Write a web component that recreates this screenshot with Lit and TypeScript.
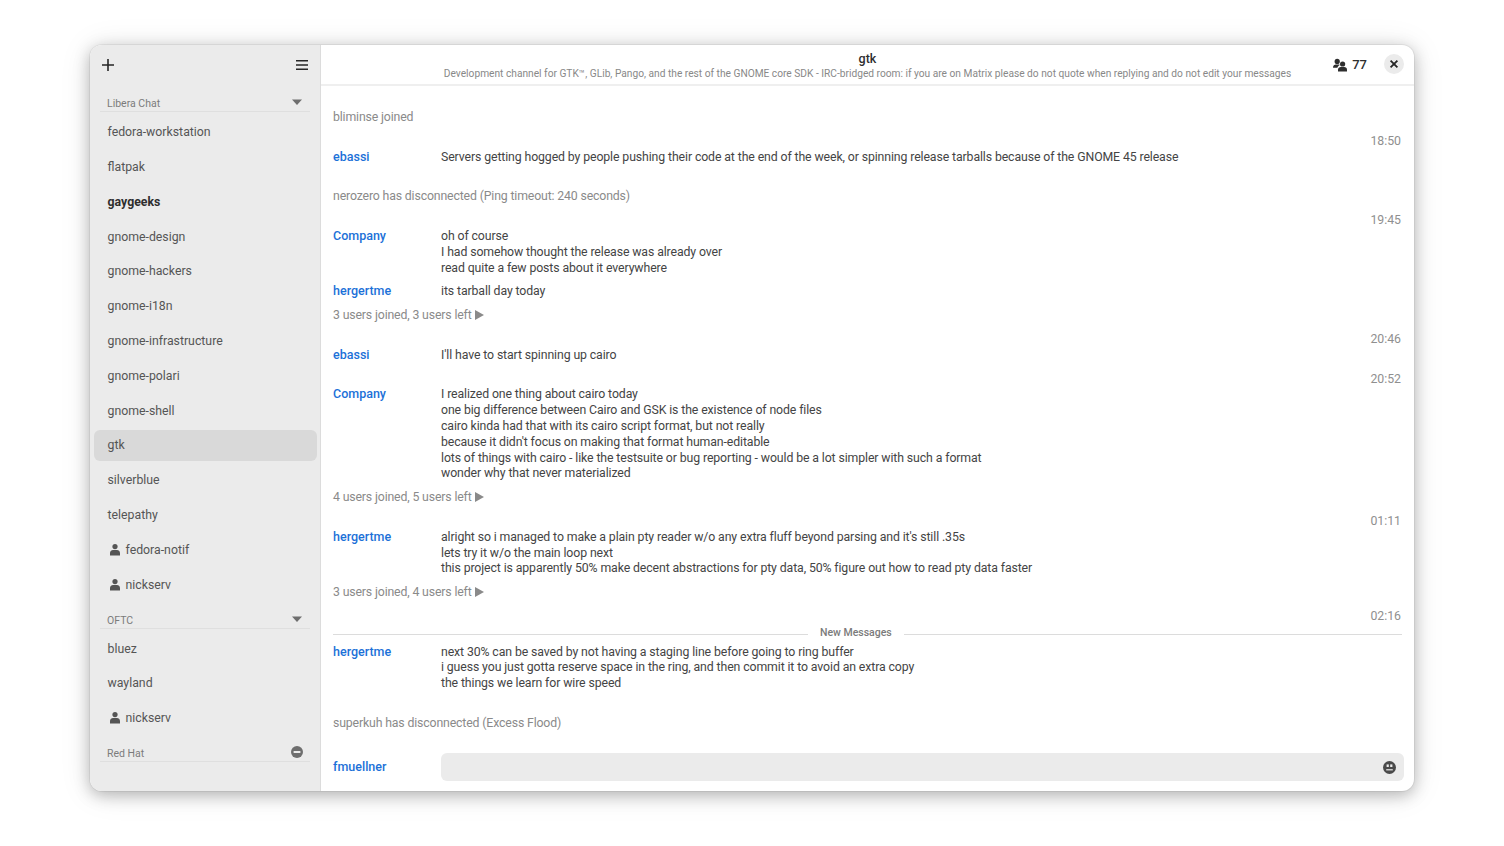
import { LitElement, css, html, nothing } from 'lit';
import { customElement } from 'lit/decorators.js';

type Item =
  | { kind: 'status'; text: string; arrow?: boolean; far?: boolean }
  | { kind: 'time'; text: string }
  | { kind: 'msg'; nick: string; lines: string[] }
  | { kind: 'divider' };

const ROOMS_LIBERA: [string, string?][] = [
  ['fedora-workstation'],
  ['flatpak'],
  ['gaygeeks', 'bold'],
  ['gnome-design'],
  ['gnome-hackers'],
  ['gnome-i18n'],
  ['gnome-infrastructure'],
  ['gnome-polari'],
  ['gnome-shell'],
  ['gtk', 'selected'],
  ['silverblue'],
  ['telepathy'],
  ['fedora-notif', 'person'],
  ['nickserv', 'person'],
];

const ROOMS_OFTC: [string, string?][] = [['bluez'], ['wayland'], ['nickserv', 'person']];

const LOG: Item[] = [
  { kind: 'status', text: 'bliminse joined' },
  { kind: 'time', text: '18:50' },
  {
    kind: 'msg',
    nick: 'ebassi',
    lines: [
      'Servers getting hogged by people pushing their code at the end of the week, or spinning release tarballs because of the GNOME 45 release',
    ],
  },
  { kind: 'status', text: 'nerozero has disconnected (Ping timeout: 240 seconds)', far: true },
  { kind: 'time', text: '19:45' },
  {
    kind: 'msg',
    nick: 'Company',
    lines: ['oh of course', 'I had somehow thought the release was already over', 'read quite a few posts about it everywhere'],
  },
  { kind: 'msg', nick: 'hergertme', lines: ['its tarball day today'] },
  { kind: 'status', text: '3 users joined, 3 users left', arrow: true },
  { kind: 'time', text: '20:46' },
  { kind: 'msg', nick: 'ebassi', lines: ["I'll have to start spinning up cairo"] },
  { kind: 'time', text: '20:52' },
  {
    kind: 'msg',
    nick: 'Company',
    lines: [
      'I realized one thing about cairo today',
      'one big difference between Cairo and GSK is the existence of node files',
      'cairo kinda had that with its cairo script format, but not really',
      "because it didn't focus on making that format human-editable",
      'lots of things with cairo - like the testsuite or bug reporting - would be a lot simpler with such a format',
      'wonder why that never materialized',
    ],
  },
  { kind: 'status', text: '4 users joined, 5 users left', arrow: true },
  { kind: 'time', text: '01:11' },
  {
    kind: 'msg',
    nick: 'hergertme',
    lines: [
      "alright so i managed to make a plain pty reader w/o any extra fluff beyond parsing and it's still .35s",
      'lets try it w/o the main loop next',
      'this project is apparently 50% make decent abstractions for pty data, 50% figure out how to read pty data faster',
    ],
  },
  { kind: 'status', text: '3 users joined, 4 users left', arrow: true },
  { kind: 'time', text: '02:16' },
  { kind: 'divider' },
  {
    kind: 'msg',
    nick: 'hergertme',
    lines: [
      'next 30% can be saved by not having a staging line before going to ring buffer',
      'i guess you just gotta reserve space in the ring, and then commit it to avoid an extra copy',
      'the things we learn for wire speed',
    ],
  },
  { kind: 'status', text: 'superkuh has disconnected (Excess Flood)', far: true },
];

const personIcon = html`<svg class="person" width="14" height="14" viewBox="0 0 14 14" fill="currentColor">
  <circle cx="7" cy="3.6" r="2.6" />
  <path d="M2 12.5V10c0-2 1.6-3 3-3h4c1.4 0 3 1 3 3v2.5z" />
</svg>`;

const chevron = html`<svg width="12" height="8" viewBox="0 0 12 8" fill="currentColor"><path d="M1 1.5h10L6 7z" /></svg>`;

@customElement('app-root')
export class AppRoot extends LitElement {
  static styles = css`
    :host {
      display: block;
      width: 1504px;
      height: 846px;
      box-sizing: border-box;
      padding: 45px 90px 55px;
      background: #fff;
      font-family: Roboto, sans-serif;
      font-size: 12.3px;
      color: #3d3d3d;
    }

    .window {
      display: flex;
      height: 100%;
      border-radius: 12px;
      overflow: hidden;
      background: #fff;
      box-shadow: 0 0 0 1px rgba(0, 0, 0, 0.05), 0 4px 16px rgba(0, 0, 0, 0.26), 0 2px 32px rgba(0, 0, 0, 0.1);
    }

    .sidebar {
      width: 231px;
      flex: none;
      box-sizing: border-box;
      background: #ebebeb;
      border-right: 1px solid #dcdcdc;
      padding: 0 3px 0 4px;
      display: flex;
      flex-direction: column;
    }

    .side-top {
      height: 42.6px;
      box-sizing: border-box;
      flex: none;
      display: flex;
      align-items: center;
      justify-content: space-between;
      padding: 1px 8px 3px 7px;
      color: #262626;
    }

    .section {
      height: 23.7px;
      flex: none;
      display: flex;
      align-items: flex-end;
      justify-content: space-between;
      margin: 0 7px 4.5px 6px;
      padding: 0 7px;
      border-bottom: 1px solid #dfdfdf;
      font-size: 10.5px;
      line-height: 14px;
      color: #7b7b7b;
    }

    .section .ctl {
      height: 16px;
      display: flex;
      align-items: center;
      color: #6e6e6e;
      position: relative;
      top: -1px;
    }

    .room {
      height: 31px;
      flex: none;
      display: flex;
      align-items: center;
      gap: 4px;
      padding: 0 13.5px;
      margin-bottom: 3.8px;
      border-radius: 6px;
      color: #555;
    }

    .room.bold {
      font-weight: 700;
      color: #2e2e2e;
    }

    .room.selected {
      background: #d9d9d9;
    }

    .main {
      flex: 1;
      min-width: 0;
      display: flex;
      flex-direction: column;
    }

    .header {
      height: 41px;
      flex: none;
      position: relative;
      border-bottom: 2px solid #efefef;
      display: flex;
      flex-direction: column;
      align-items: center;
      padding-top: 6px;
      box-sizing: border-box;
    }

    .title {
      font-weight: 500;
      font-size: 12.5px;
      line-height: 15px;
      color: #2e2e2e;
    }

    .subtitle {
      font-size: 10.2px;
      line-height: 15px;
      color: #888;
    }

    .users {
      position: absolute;
      right: 47px;
      top: 12px;
      display: flex;
      align-items: center;
      gap: 5px;
      font-weight: 500;
      font-size: 13px;
      color: #2e2e2e;
    }

    .close {
      position: absolute;
      right: 10px;
      top: 9px;
      width: 20px;
      height: 20px;
      border-radius: 50%;
      background: #ebebeb;
      display: flex;
      align-items: center;
      justify-content: center;
      color: #262626;
    }

    .log {
      flex: 1;
      min-height: 0;
      overflow: hidden;
      padding: 24px 12px 0;
      line-height: 15.8px;
    }

    .status {
      margin-bottom: 8px;
      color: #8a8a8a;
      letter-spacing: -0.15px;
    }

    .status.far {
      margin-top: 24px;
    }

    .status svg {
      margin-left: 3px;
      vertical-align: -1px;
    }

    .time {
      text-align: right;
      color: #8f8f8f;
      padding-right: 1px;
    }

    .msg {
      display: grid;
      grid-template-columns: 108px 1fr;
      margin-bottom: 8px;
    }

    .nick {
      font-weight: 500;
      font-size: 12.5px;
      line-height: 14.6px;
      color: #1c71d8;
    }

    .body {
      color: #444;
      letter-spacing: -0.11px;
    }

    .divider {
      display: flex;
      align-items: center;
      gap: 12px;
      height: 15.8px;
      margin-bottom: 4px;
      font-size: 10.5px;
      font-weight: 500;
      color: #7b7b7b;
    }

    .divider i {
      flex: 1;
      height: 1px;
      background: #dcdcdc;
      position: relative;
      top: 2px;
    }

    .divider i:first-child {
      flex: none;
      width: 475px;
    }

    .composer {
      flex: none;
      display: grid;
      grid-template-columns: 108px 1fr;
      align-items: center;
      padding: 0 10px 10px 12px;
    }

    .entry {
      height: 28px;
      border-radius: 6px;
      background: #ebebeb;
      display: flex;
      align-items: center;
      justify-content: flex-end;
      padding-right: 8px;
      color: #4a4a4a;
    }
  `;

  private renderRooms(rooms: [string, string?][]) {
    return rooms.map(
      ([name, flag]) => html`<div class="room ${flag ?? ''}">${flag === 'person' ? personIcon : nothing}<span>${name}</span></div>`,
    );
  }

  private renderItem(item: Item) {
    switch (item.kind) {
      case 'status':
        return html`<div class="status ${item.far ? 'far' : ''}">
          ${item.text}${item.arrow
            ? html`<svg width="9" height="10" viewBox="0 0 9 10" fill="#8a8a8a"><path d="M0 0l9 5-9 5z" /></svg>`
            : nothing}
        </div>`;
      case 'time':
        return html`<div class="time">${item.text}</div>`;
      case 'divider':
        return html`<div class="divider"><i></i><span>New Messages</span><i></i></div>`;
      default:
        return html`<div class="msg">
          <div class="nick">${item.nick}</div>
          <div class="body">${item.lines.map((l) => html`<div>${l}</div>`)}</div>
        </div>`;
    }
  }

  render() {
    return html`
      <div class="window">
        <aside class="sidebar">
          <div class="side-top">
            <svg width="14" height="14" viewBox="0 0 14 14" fill="currentColor"><path d="M6.2 1h1.6v5.2H13v1.6H7.8V13H6.2V7.8H1V6.2h5.2z" /></svg>
            <svg width="14" height="14" viewBox="0 0 14 14" fill="currentColor"><path d="M1 2h12v1.6H1zM1 6.2h12v1.6H1zM1 10.4h12V12H1z" /></svg>
          </div>
          <div class="section"><span>Libera Chat</span><span class="ctl">${chevron}</span></div>
          ${this.renderRooms(ROOMS_LIBERA)}
          <div class="section"><span>OFTC</span><span class="ctl">${chevron}</span></div>
          ${this.renderRooms(ROOMS_OFTC)}
          <div class="section">
            <span>Red Hat</span>
            <span class="ctl">
              <svg width="12" height="12" viewBox="0 0 12 12"><circle cx="6" cy="6" r="6" fill="currentColor" /><rect x="2.6" y="5" width="6.8" height="2" fill="#ebebeb" /></svg>
            </span>
          </div>
        </aside>
        <main class="main">
          <header class="header">
            <div class="title">gtk</div>
            <div class="subtitle">
              Development channel for GTK™, GLib, Pango, and the rest of the GNOME core SDK - IRC-bridged room: if you are on Matrix please do not quote when replying and do not edit your messages
            </div>
            <div class="users">
              <svg width="14" height="14" viewBox="0 0 14 14" fill="currentColor">
                <circle cx="4.2" cy="3.4" r="2.6" />
                <path d="M0 9.8C0 7.6 1.4 6.6 3 6.6h2.4c.6 0 1 .1 1.4.4C5.6 7.6 4.6 8.6 4.4 9.8H0z" />
                <circle cx="9.6" cy="6" r="2.6" />
                <path d="M5 13.4v-1.8c0-1.7 1.2-2.6 2.8-2.6h3.4c1.6 0 2.8.9 2.8 2.6v1.8z" />
              </svg>
              <span>77</span>
            </div>
            <div class="close">
              <svg width="10" height="10" viewBox="0 0 10 10" fill="none" stroke="currentColor" stroke-width="1.8"><path d="M1.6 1.6l6.8 6.8M8.4 1.6l-6.8 6.8" /></svg>
            </div>
          </header>
          <section class="log">${LOG.map((i) => this.renderItem(i))}</section>
          <footer class="composer">
            <div class="nick">fmuellner</div>
            <div class="entry">
              <svg width="13" height="13" viewBox="0 0 13 13">
                <circle cx="6.5" cy="6.5" r="6.5" fill="currentColor" />
                <rect x="3.6" y="3.4" width="2.2" height="2.6" fill="#ebebeb" />
                <rect x="7.2" y="3.4" width="2.2" height="2.6" fill="#ebebeb" />
                <rect x="3.2" y="8.2" width="6.6" height="1.2" fill="#ebebeb" />
              </svg>
            </div>
          </footer>
        </main>
      </div>
    `;
  }
}

declare global {
  interface HTMLElementTagNameMap {
    'app-root': AppRoot;
  }
}
